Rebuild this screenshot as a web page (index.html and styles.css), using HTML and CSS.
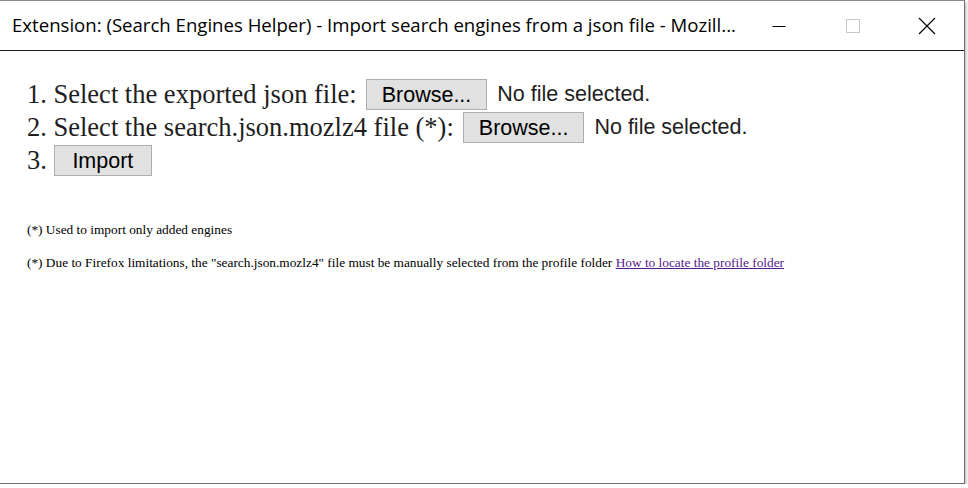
FILE: index.html
```html
<!DOCTYPE html>
<html>
<head>
<meta charset="utf-8">
<link rel="stylesheet" href="styles.css">
</head>
<body>
<div class="window">
  <div class="titlebar">
    <div class="title">Extension: (Search Engines Helper) - Import search engines from a json file - Mozill...</div>
    <div class="controls">
      <div class="ctl"><svg width="16" height="16" viewBox="0 0 16 16"><path d="M1.5 8.5h13" stroke="#000" stroke-width="1"/></svg></div>
      <div class="ctl"><svg width="16" height="16" viewBox="0 0 16 16"><rect x="1.5" y="1.5" width="13" height="13" fill="none" stroke="#c8c8c8" stroke-width="1"/></svg></div>
      <div class="ctl"><svg width="18" height="18" viewBox="0 0 18 18"><path d="M1 1L17 17M17 1L1 17" stroke="#000" stroke-width="1.1"/></svg></div>
    </div>
  </div>
  <div class="content">
    <div class="row">1. Select the exported json file:<button class="btn">Browse...</button><span class="nofile">No file selected.</span></div>
    <div class="row">2. Select the search.json.mozlz4 file (*):<button class="btn">Browse...</button><span class="nofile">No file selected.</span></div>
    <div class="row">3.<button class="btn btn-import">Import</button></div>
    <p class="note first">(*) Used to import only added engines</p>
    <p class="note">(*) Due to Firefox limitations, the "search.json.mozlz4" file must be manually selected from the profile folder <a href="#" class="link">How to locate the profile folder</a></p>
  </div>
</div>
</body>
</html>
```
FILE: styles.css
```css
html, body {
  margin: 0;
  padding: 0;
  background: #ffffff;
}
.window {
  width: 965px;
  height: 484px;
  box-sizing: border-box;
  border-top: 1px solid #8c8c8c;
  border-right: 1px solid #6e6e6e;
  border-bottom: 1px solid #6e6e6e;
  background: #fff;
  box-shadow: 1px 2px 4px rgba(0,0,0,0.3);
  display: flex;
  flex-direction: column;
}
.titlebar {
  height: 49px;
  border-bottom: 1px solid #1a1a1a;
  display: flex;
  align-items: center;
}
.title {
  padding-left: 12px;
  font-family: "Open Sans", sans-serif;
  font-size: 18.6px;
  color: #000;
  flex: 1;
  white-space: nowrap;
  padding-bottom: 2px;
}
.controls {
  display: flex;
  height: 100%;
}
.ctl {
  width: 74px;
  display: flex;
  align-items: center;
  justify-content: center;
}
.content {
  padding: 27px 0 0 27px;
  font-family: "Liberation Serif", serif;
  color: #1e1e1e;
}
.row {
  height: 33px;
  display: flex;
  align-items: center;
  font-size: 26.5px;
  white-space: nowrap;
}
.btn {
  height: 31px;
  margin-left: 9px;
  padding: 1px 15px 0;
  border: 1px solid #adadad;
  background: #e1e1e1;
  font-family: "Liberation Sans", sans-serif;
  font-size: 21.5px;
  color: #000;
  border-radius: 0;
}
.btn-import {
  margin-left: 7px;
  padding: 1px 17.5px 0;
}
.nofile {
  margin-left: 10px;
  font-family: "Liberation Sans", sans-serif;
  font-size: 21.5px;
  color: #1e1e1e;
}
.note {
  margin: 0;
  font-size: 13.33px;
  color: #000;
  height: 33px;
  line-height: 15px;
}
.note.first {
  margin-top: 45px;
}
.link {
  color: #551a8b;
}
```
